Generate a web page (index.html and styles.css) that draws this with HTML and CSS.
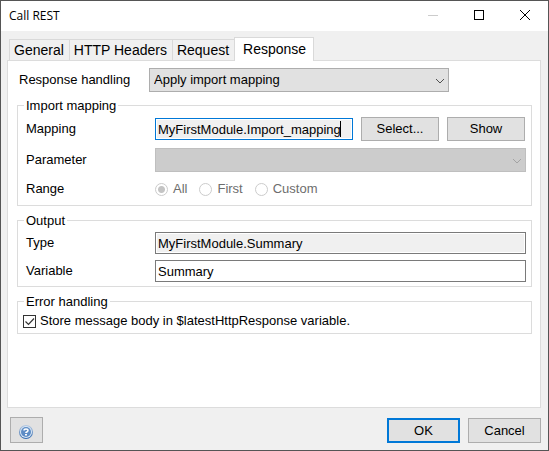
FILE: index.html
```
<!DOCTYPE html>
<html lang="en">
<head>
<meta charset="utf-8">
<title>Call REST</title>
<link rel="stylesheet" href="styles.css">
</head>
<body>
<main class="window">
  <header class="titlebar">
    <h1 class="title">Call REST</h1>
    <div class="window-controls">
      <button class="window-button" type="button" aria-label="Minimize" disabled>
        <svg width="10" height="10" viewBox="0 0 10 10" shape-rendering="crispEdges"><path d="M0 5.5h10" stroke="#ccc" fill="none"/></svg>
      </button>
      <button class="window-button" type="button" aria-label="Maximize">
        <svg width="10" height="10" viewBox="0 0 10 10" shape-rendering="crispEdges"><path d="M.5 .5h9v9h-9z" stroke="#000" fill="none"/></svg>
      </button>
      <button class="window-button" type="button" aria-label="Close">
        <svg width="10" height="10" viewBox="0 0 10 10"><path d="M0 0l10 10M10 0L0 10" stroke="#000" fill="none"/></svg>
      </button>
    </div>
  </header>

  <form class="dialog">
    <div class="tabs" role="tablist">
      <button class="tab" type="button" role="tab">General</button>
      <button class="tab" type="button" role="tab">HTTP Headers</button>
      <button class="tab" type="button" role="tab">Request</button>
      <button class="tab tab-active" type="button" role="tab" aria-selected="true">Response</button>
    </div>

    <section class="panel">
      <div class="row row-top">
        <label class="label" for="handling">Response handling</label>
        <div class="select-box handling">
          <select class="select" id="handling"><option>Apply import mapping</option></select>
          <svg class="chevron" width="8" height="6" viewBox="0 0 8 6"><path d="M0 1l4 4 4-4" stroke="#505050" fill="none"/></svg>
        </div>
      </div>

      <fieldset class="group group-mapping">
        <legend class="legend">Import mapping</legend>
        <div class="row">
          <label class="label" for="mapping">Mapping</label>
          <div class="mapping-controls">
            <div class="caret-box">
              <input class="input input-readonly input-focus" id="mapping" type="text" value="MyFirstModule.Import_mapping" readonly>
              <span class="caret"></span>
            </div>
            <button class="button" type="button">Select...</button>
            <button class="button" type="button">Show</button>
          </div>
        </div>
        <div class="row">
          <label class="label" for="parameter">Parameter</label>
          <div class="select-box">
            <select class="select" id="parameter" disabled><option></option></select>
            <svg class="chevron" width="8" height="6" viewBox="0 0 8 6"><path d="M0 1l4 4 4-4" stroke="#a3a3a3" fill="none"/></svg>
          </div>
        </div>
        <div class="row row-range" role="radiogroup" aria-labelledby="range">
          <span class="label" id="range">Range</span>
          <div class="radios">
            <label class="radio-label"><input class="radio" type="radio" name="range" checked disabled>All</label>
            <label class="radio-label"><input class="radio" type="radio" name="range" disabled>First</label>
            <label class="radio-label"><input class="radio" type="radio" name="range" disabled>Custom</label>
          </div>
        </div>
      </fieldset>

      <fieldset class="group group-output">
        <legend class="legend">Output</legend>
        <div class="row">
          <label class="label" for="type">Type</label>
          <input class="input input-readonly" id="type" type="text" value="MyFirstModule.Summary" readonly>
        </div>
        <div class="row">
          <label class="label" for="variable">Variable</label>
          <input class="input" id="variable" type="text" value="Summary">
        </div>
      </fieldset>

      <fieldset class="group group-error">
        <legend class="legend">Error handling</legend>
        <div class="check-row">
          <span class="check-box">
            <input class="checkbox" id="store" type="checkbox" checked>
            <svg class="tick" width="13" height="13" viewBox="0 0 13 13"><path d="M2.5 6.5l3 3 5.500-6" stroke="#333" stroke-width="1.200" fill="none"/></svg>
          </span>
          <label class="check-label" for="store">Store message body in $latestHttpResponse variable.</label>
        </div>
      </fieldset>
    </section>

    <footer class="footer">
      <button class="button button-help" type="button" aria-label="Help">
        <svg width="14" height="14" viewBox="0 0 14 14">
          <defs><linearGradient id="ring" x1="0" y1="0" x2="0" y2="1"><stop offset="0" stop-color="#b8cbe3"/><stop offset="1" stop-color="#2f68ae"/></linearGradient></defs>
          <circle cx="7" cy="7" r="7" fill="url(#ring)"/>
          <circle cx="7" cy="7" r="6" fill="#dce8f5"/>
          <circle cx="7" cy="7" r="5" fill="#5d8cc5"/>
          <path d="M5 5.500Q5 4 7 4T9 5.500Q9 6.500 7 7.500V8" stroke="#fff" stroke-width="1.500" fill="none"/>
          <path d="M6 9h2v1.500H6z" fill="#fff"/>
        </svg>
      </button>
      <div class="actions">
        <button class="button button-default" type="submit">OK</button>
        <button class="button button-cancel" type="button">Cancel</button>
      </div>
    </footer>
  </form>
</main>
</body>
</html>
```

FILE: styles.css
```
* {
  box-sizing: border-box;
}

body {
  margin: 0;
  font: 13px/18px "Liberation Sans", Arial, sans-serif;
  color: #000;
}

button,
input,
select {
  margin: 0;
  font: inherit;
  color: inherit;
  border-radius: 0;
  outline: none;
}

.window {
  display: flex;
  flex-direction: column;
  min-height: 100vh;
  border: 1px solid #555;
  background: #f0f0f0;
}

.titlebar {
  display: flex;
  justify-content: space-between;
  height: 30px;
  background: #fff;
}

.title {
  margin: 0;
  padding-left: 8px;
  font: 12px/29px "Open Sans", "Noto Sans", sans-serif;
}

.window-controls {
  display: flex;
}

.window-button {
  display: flex;
  align-items: center;
  justify-content: center;
  width: 46px;
  height: 28px;
  padding: 0;
  border: 0;
  background: none;
}

.dialog {
  display: flex;
  flex: 1;
  flex-direction: column;
  padding: 6px 7px 7px 6px;
}

.tabs {
  display: flex;
  align-items: flex-end;
  padding-left: 2px;
}

.tab {
  height: 21px;
  padding: 0 5px 0 4px;
  border: 1px solid #d9d9d9;
  border-width: 1px 0 0 1px;
  background: #f0f0f0;
  font-size: 14px;
}

.tab-active {
  height: 24px;
  margin-bottom: -1px;
  padding: 0 7px 2px 8px;
  border-right-width: 1px;
  background: #fff;
  z-index: 1;
}

.panel {
  flex: 1;
  padding: 7px 8px 0 9px;
  border: 1px solid #dcdcdc;
  background: #fff;
}

.row {
  display: grid;
  grid-template-columns: 129px 1fr;
  align-items: center;
}

.row-top {
  grid-template-columns: 130px 300px;
  padding-left: 2px;
  margin-bottom: 5px;
}

.row-range {
  min-height: 20px;
}

.select-box {
  position: relative;
  height: 24px;
}

.select {
  display: block;
  width: 100%;
  height: 24px;
  padding: 0 24px 0 4px;
  border: 1px solid #adadad;
  background: #e1e1e1;
  appearance: none;
}

.select:disabled {
  border-color: #bfbfbf;
  background: #ccc;
  opacity: 1;
}

.chevron {
  position: absolute;
  top: 10px;
  right: 5px;
  pointer-events: none;
}

.group {
  display: grid;
  min-width: 0;
  margin: 0;
  padding: 3px 5px 4px 8px;
  border: 1px solid #dcdcdc;
}

.group-mapping {
  row-gap: 7px;
  padding-bottom: 6px;
  margin-bottom: 6px;
}

.group-output {
  row-gap: 6px;
  margin-bottom: 6px;
}

.group-error {
  padding: 3px 5px 4px;
}

.legend {
  height: 17px;
  padding: 0 2px;
  margin-left: -2px;
}

.group-error .legend {
  margin-left: 1px;
}

.input {
  display: block;
  width: 100%;
  height: 22px;
  padding: 0 2px;
  border: 1px solid #7a7a7a;
  background: #fff;
}

.input-readonly {
  box-shadow: inset 0 0 0 1px #fff;
  background: #f0f0f0;
}

.input-focus {
  border-color: #0078d7;
}

.mapping-controls {
  display: grid;
  grid-template-columns: 1fr 78px 78px;
  column-gap: 8px;
  align-items: center;
  padding-right: 1px;
}

.caret-box {
  position: relative;
}

.caret {
  position: absolute;
  top: 3px;
  right: 12px;
  width: 1px;
  height: 16px;
  background: #000;
}

.button {
  display: flex;
  align-items: center;
  justify-content: center;
  height: 24px;
  padding: 0;
  border: 1px solid #adadad;
  background: #e1e1e1;
}

.radios {
  display: flex;
  gap: 12px;
  color: #6d6d6d;
}

.radio-label {
  display: flex;
  align-items: center;
  gap: 5px;
}

.radio {
  width: 13px;
  height: 13px;
  border: 1px solid #ccc;
  border-radius: 50%;
  background: #fff;
  appearance: none;
}

.radio:checked {
  background: radial-gradient(circle, #c4c4c4 3px, #fff 4px);
}

.check-row {
  display: flex;
  align-items: center;
  gap: 4px;
}

.check-box {
  position: relative;
  width: 13px;
  height: 13px;
}

.checkbox {
  display: block;
  width: 13px;
  height: 13px;
  border: 1px solid #333;
  background: #fff;
  appearance: none;
}

.tick {
  position: absolute;
  inset: 0;
  pointer-events: none;
}

.check-label {
  height: 16px;
  line-height: 16px;
  overflow: hidden;
}

.footer {
  display: flex;
  align-items: flex-end;
  justify-content: space-between;
  padding: 9px 0 0 3px;
}

.button-help {
  width: 33px;
  height: 26px;
  padding: 4px 2px 0 0;
}

.actions {
  display: flex;
  gap: 8px;
}

.button-default,
.button-cancel {
  width: 73px;
  height: 25px;
}

.button-default {
  border: 2px solid #0078d7;
}
```
